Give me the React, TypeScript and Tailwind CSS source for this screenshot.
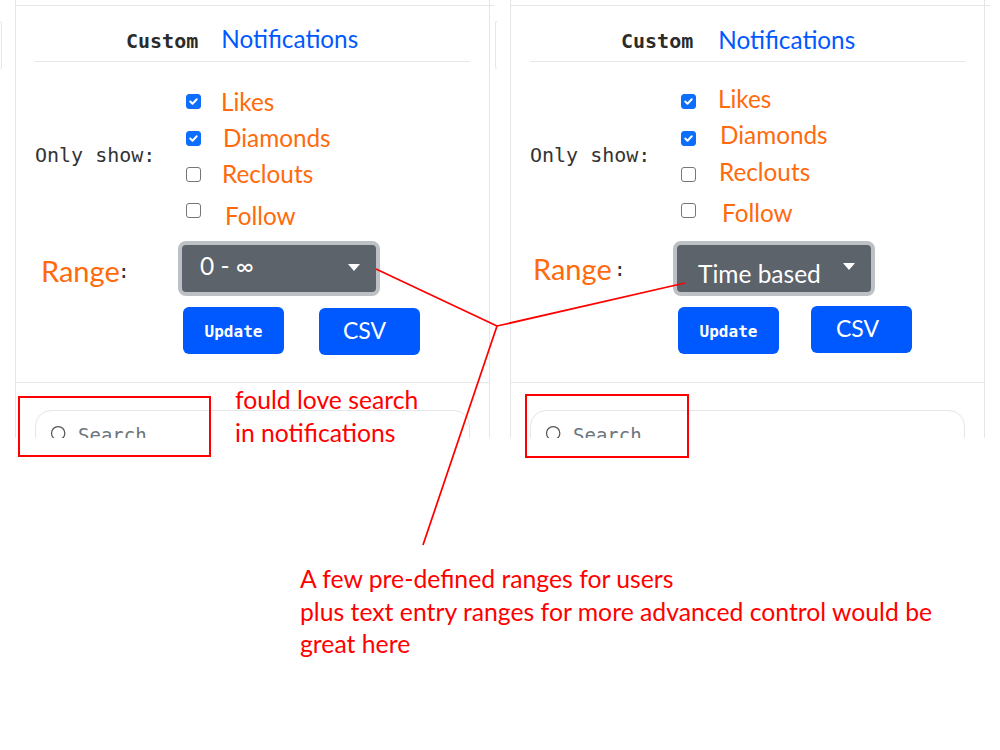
import React from 'react';
import { Search } from 'lucide-react';

const sans = 'font-["Lato","Carlito",sans-serif]';
const mono = 'font-["DejaVu_Sans_Mono",monospace]';

type Option = { label: string; checked: boolean; boxClass: string; labelClass: string };

type PanelData = {
  notifClass: string;
  options: Option[];
  rangeClass: string;
  colonClass: string;
  selectText: string;
  selectTextClass: string;
  caretClass: string;
  csvClass: string;
  csvTextClass: string;
  topLineClass: string;
};

const panels: PanelData[] = [
  {
    notifClass: 'ml-[23px] mt-[21px]',
    options: [
      { label: 'Likes', checked: true, boxClass: 'mt-[10px]', labelClass: 'ml-[20px]' },
      { label: 'Diamonds', checked: true, boxClass: 'mt-[11px]', labelClass: 'ml-[22px]' },
      { label: 'Reclouts', checked: false, boxClass: 'mt-[11px]', labelClass: 'ml-[21px]' },
      { label: 'Follow', checked: false, boxClass: 'mt-[11px]', labelClass: 'ml-[24px] mt-[6px]' },
    ],
    rangeClass: 'ml-[6px] mt-[4px]',
    colonClass: '-ml-[2px] mt-[4px]',
    selectText: '0 - ∞',
    selectTextClass: '-mt-[4px] ml-[18px]',
    caretClass: 'right-[16px] top-[19px]',
    csvClass: 'ml-[35px] mt-[1px]',
    csvTextClass: '-ml-[10px] -mt-[2px]',
    topLineClass: 'w-[479px]',
  },
  {
    notifClass: 'ml-[25px] mt-[22px]',
    options: [
      { label: 'Likes', checked: true, boxClass: 'mt-[10px]', labelClass: 'ml-[22px] -mt-[3px]' },
      { label: 'Diamonds', checked: true, boxClass: 'mt-[11px]', labelClass: 'ml-[24px] -mt-[3px]' },
      { label: 'Reclouts', checked: false, boxClass: 'mt-[11px]', labelClass: 'ml-[23px] -mt-[2px]' },
      { label: 'Follow', checked: false, boxClass: 'mt-[11px]', labelClass: 'ml-[26px] mt-[3px]' },
    ],
    rangeClass: 'ml-[3px]',
    colonClass: 'ml-[2px]',
    selectText: 'Time based',
    selectTextClass: 'mt-[12px] ml-[21px]',
    caretClass: 'right-[16px] top-[18px]',
    csvClass: 'ml-[32px] -mt-[1px]',
    csvTextClass: '-ml-[8px] -mt-[2px]',
    topLineClass: 'w-[480px]',
  },
];

const CheckBox = ({ checked, className }: { checked: boolean; className: string }) => (
  <span
    className={`flex h-[15px] w-[15px] shrink-0 items-center justify-center rounded-[3px] border ${
      checked ? 'border-[#0d6efd] bg-[#0d6efd]' : 'border-[#767676] bg-white'
    } ${className}`}
  >
    {checked && (
      <svg viewBox="0 0 20 20" className="h-[13px] w-[13px]">
        <path d="M5 10l3.5 3.5L15 6.5" fill="none" stroke="white" strokeWidth="3" strokeLinecap="round" strokeLinejoin="round" />
      </svg>
    )}
  </span>
);

const Sliver = ({ side }: { side: 'left' | 'right' }) => (
  <div
    className={`mt-[21px] h-[48px] w-[2px] shrink-0 border-y border-[#e6e6e6] ${
      side === 'left' ? 'rounded-r-[3px] border-r' : 'rounded-l-[3px] border-l'
    }`}
  />
);

const Panel = ({ data }: { data: PanelData }) => (
  <div className="h-[438px] w-[475px] shrink-0 border-x border-[#e6e6e6] pt-[5px]">
    <div className={`-ml-px h-px bg-[#e6e6e6] ${data.topLineClass}`} />
    <div className="px-[19px]">
      <div className="flex h-[56px] items-start border-b border-[#e6e6e6] pl-[91px]">
        <span className={`${mono} mt-[25px] text-[20px] leading-none font-bold text-[#2b2b2b]`}>Custom</span>
        <span className={`${sans} ${data.notifClass} text-[24.3px] leading-none text-[#0059ff]`}>Notifications</span>
      </div>

      <div className="mt-[22px] flex items-center">
        <span className={`${mono} -mt-[2px] w-[151px] shrink-0 text-[20px] text-[#333]`}>Only show:</span>
        <div>
          {data.options.map((opt) => (
            <div key={opt.label} className="flex h-[36px] items-start">
              <CheckBox checked={opt.checked} className={opt.boxClass} />
              <span className={`${sans} ${opt.labelClass} text-[24.3px] leading-[36px] text-[#ff6a0d]`}>{opt.label}</span>
            </div>
          ))}
        </div>
      </div>

      <div className="mt-[13px] flex items-center">
        <div className="flex w-[143px] shrink-0 items-center">
          <span className={`${sans} ${data.rangeClass} text-[29px] leading-none text-[#ff6a0d]`}>Range</span>
          <span className={`${mono} ${data.colonClass} text-[20px] leading-none text-[#333]`}>:</span>
        </div>
        <div className="relative flex h-[55px] w-[202px] items-center rounded-[8px] border-4 border-[#bdc1c6] bg-[#5c636a]">
          <span className={`${sans} ${data.selectTextClass} text-[24.5px] leading-none text-white`}>{data.selectText}</span>
          <span className={`absolute h-0 w-0 border-x-[6px] border-t-[7px] border-x-transparent border-t-white ${data.caretClass}`} />
        </div>
      </div>

      <div className="mt-[11px] flex h-[47px] items-start pl-[148px]">
        <button className={`${mono} h-[47px] w-[101px] rounded-[6px] bg-[#0059ff] pt-[2px] text-[16px] font-bold text-white`}>Update</button>
        <button className={`${sans} ${data.csvClass} h-[47px] w-[101px] rounded-[6px] bg-[#0059ff] text-[23px] text-white`}>
          <span className={`block ${data.csvTextClass}`}>CSV</span>
        </button>
      </div>
    </div>

    <div className="mt-[28px] border-t border-[#e6e6e6] px-[19px] pt-[27px]">
      <div className="flex h-[60px] items-start rounded-[16px] border border-[#e6e6e6] pt-[13px] pl-[13px]">
        <Search size={20} strokeWidth={1.5} className="shrink-0 text-[#555]" />
        <span className={`${mono} mt-[1px] ml-[9px] text-[19px] leading-[20px] text-[#6c757d]`}>Search</span>
      </div>
    </div>
  </div>
);

const App = () => {
  return (
    <div className="relative h-[750px] w-[1000px] overflow-hidden bg-white">
      <div className="flex h-[438px] items-start overflow-hidden">
        <Sliver side="left" />
        <div className="ml-[13px]">
          <Panel data={panels[0]} />
        </div>
        <div className="ml-[5px]">
          <Sliver side="right" />
        </div>
        <div className="ml-[13px]">
          <Panel data={panels[1]} />
        </div>
      </div>

      {/* red notes drawn over the screenshots */}
      <svg className="absolute inset-0 h-[750px] w-[1000px]" viewBox="0 0 1000 750" fill="none" stroke="#ff0000" strokeWidth="1.75">
        <path d="M376 269L497 326M685 283L497 326M497 326L423 545" />
      </svg>
      <div className="absolute top-[396px] left-[18px] h-[61px] w-[193px] border-2 border-[#ff0000]" />
      <div className="absolute top-[394px] left-[525px] h-[64px] w-[164px] border-2 border-[#ff0000]" />
      <div className={`${sans} absolute top-[383px] left-[235px] text-[24.7px] leading-[33px] text-[#ff0000]`}>
        fould love search
        <br />
        in notifications
      </div>
      <div className={`${sans} absolute top-[563px] left-[300px] w-[670px] text-[24.75px] leading-[32.5px] text-[#ff0000]`}>
        A few pre-defined ranges for users
        <br />
        plus text entry ranges for more advanced control would be
        <br />
        great here
      </div>
    </div>
  );
};

export default App;
